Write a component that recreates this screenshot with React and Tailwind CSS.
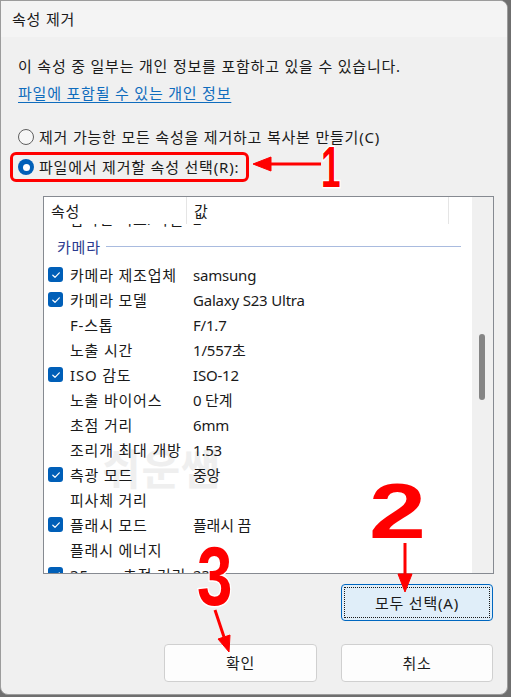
import React from 'react';

const rows = [
  { label: '카메라 제조업체', value: 'samsung', checked: true },
  { label: '카메라 모델', value: 'Galaxy S23 Ultra', checked: true },
  { label: 'F-스톱', value: 'F/1.7', checked: false },
  { label: '노출 시간', value: '1/557초', checked: false },
  { label: 'ISO 감도', value: 'ISO-12', checked: true },
  { label: '노출 바이어스', value: '0 단계', checked: false },
  { label: '초점 거리', value: '6mm', checked: false },
  { label: '조리개 최대 개방', value: '1.53', checked: false },
  { label: '측광 모드', value: '중앙', checked: true },
  { label: '피사체 거리', value: '', checked: false },
  { label: '플래시 모드', value: '플래시 끔', checked: true },
  { label: '플래시 에너지', value: '', checked: false },
  { label: '35mm 초점 거리', value: '23', checked: true },
];

const Check = ({ checked }) =>
  checked ? (
    <span className="w-[15px] h-[15px] rounded-[3px] bg-[#005fb8] flex items-center justify-center shrink-0">
      <svg width="10" height="10" viewBox="0 0 10 10" fill="none">
        <path d="M1.8 5.2 L4 7.3 L8.3 2.8" stroke="white" strokeWidth="1.2" strokeLinecap="round" strokeLinejoin="round" />
      </svg>
    </span>
  ) : (
    <span className="w-[15px] h-[15px] shrink-0" />
  );

const Row = ({ row }) => (
  <div className="h-[25px] flex items-center shrink-0">
    <div className="w-[149px] flex items-center pl-[4px] shrink-0">
      <Check checked={row.checked} />
      <span className="ml-[7px] whitespace-nowrap">{row.label}</span>
    </div>
    <span className="whitespace-nowrap tracking-[-0.2px]">{row.value}</span>
  </div>
);

const Radio = ({ selected, children }) => (
  <div className="flex items-center h-[20px] pl-[17px]">
    {selected ? (
      <span className="w-[16px] h-[16px] rounded-full bg-[#005fb8] flex items-center justify-center">
        <span className="w-[7px] h-[7px] rounded-full bg-white" />
      </span>
    ) : (
      <span className="w-[16px] h-[16px] rounded-full border border-[#5f5f5f] bg-[#f7f7f7]" />
    )}
    <span className="ml-[5px] whitespace-nowrap">{children}</span>
  </div>
);

const App = () => {
  return (
    <div
      className="relative w-[511px] h-[697px] bg-[#6f6f6f] overflow-hidden text-[15px] leading-[20px] tracking-[0.8px] text-[#1a1a1a]"
      style={{ fontFamily: '"Segoe UI", "Noto Sans", "Noto Sans CJK KR", sans-serif' }}
    >
      <div className="w-[508px] h-[695px] bg-[#f0f0f0] border border-[#9c9c9c] rounded-tr-[8px] rounded-b-[8px] flex flex-col overflow-hidden">
        {/* Title */}
        <div className="h-[36px] flex items-center pl-[11px] bg-[#f4f4f4] shrink-0">속성 제거</div>

        <div className="mt-[19px] pl-[17px] h-[20px] whitespace-nowrap">이 속성 중 일부는 개인 정보를 포함하고 있을 수 있습니다.</div>
        <div className="mt-[7px] pl-[17px] h-[20px]">
          <span className="text-[#0f6cbd] underline underline-offset-[3px]">파일에 포함될 수 있는 개인 정보</span>
        </div>

        <div className="mt-[24px]">
          <Radio>제거 가능한 모든 속성을 제거하고 복사본 만들기(C)</Radio>
        </div>
        <div className="mt-[10px]">
          <Radio selected>파일에서 제거할 속성 선택(R):</Radio>
        </div>

        {/* Property list */}
        <div className="mt-[19px] ml-[42px] w-[451px] h-[378px] border border-[#868a91] bg-white flex shrink-0">
          <div className="relative isolate flex-1 flex flex-col overflow-hidden">
            <div className="absolute z-0 left-[58px] top-[250px] text-[42px] leading-[44px] font-bold text-[#efefef] whitespace-nowrap select-none">
              쉬운쌤
            </div>
            <div className="relative z-10 flex flex-col">
              <div className="h-[27px] flex items-center shrink-0 bg-white relative z-10">
                <div className="w-[143px] h-full flex items-center pl-[7px] border-r border-[#e5e5e5]">속성</div>
                <div className="w-[262px] h-full flex items-center pl-[7px] border-r border-[#e5e5e5]">값</div>
              </div>
              <div className="h-[7px] overflow-hidden shrink-0">
                <div className="-mt-[18px]">
                  <Row row={{ label: '압축된 비트/픽셀', value: '2', checked: false }} />
                </div>
              </div>
              <div className="h-[31px] flex items-center pl-[13px] pr-[11px] shrink-0">
                <span className="text-[#2b3a8f]">카메라</span>
                <span className="flex-1 ml-[5px] h-px bg-[#a9bbdf]" />
              </div>
              {rows.map((r) => (
                <Row key={r.label} row={r} />
              ))}
            </div>
          </div>
          <div className="w-[21px] bg-[#f0f0f0] relative shrink-0">
            <div className="absolute left-[7px] top-[137px] w-[6px] h-[66px] rounded-full bg-[#858585]" />
          </div>
        </div>

        <div className="mt-[10px] ml-[340px] w-[152px] h-[37px] rounded-[4px] border border-[#0067c0] bg-[#e0eef9] p-[2px] shrink-0">
          <div className="w-full h-full border border-dotted border-[#1a1a1a] flex items-center justify-center">
            모두 선택(A)
          </div>
        </div>

        <div className="mt-[23px] flex shrink-0">
          <div className="ml-[163px] w-[153px] h-[38px] rounded-[4px] border border-[#d0d0d0] bg-[#fdfdfd] flex items-center justify-center">
            확인
          </div>
          <div className="ml-[24px] w-[152px] h-[38px] rounded-[4px] border border-[#d0d0d0] bg-[#fdfdfd] flex items-center justify-center">
            취소
          </div>
        </div>
      </div>

      {/* Annotations */}
      <div className="absolute left-[10px] top-[152px] w-[239px] h-[30px] border-[3px] border-[#ff0000] rounded-[6px] pointer-events-none" />
      <svg className="absolute left-0 top-0 pointer-events-none" width="511" height="697" viewBox="0 0 511 697">
        <g fill="#ff0000" stroke="#ff0000">
          <line x1="268" y1="164" x2="321" y2="164" strokeWidth="3" />
          <polygon points="253,164 271,157 271,171" strokeWidth="1" />
          <line x1="405" y1="543" x2="405" y2="576" strokeWidth="3" />
          <polygon points="405,592 398,574 412,574" strokeWidth="1" />
          <line x1="215" y1="610" x2="224" y2="637" strokeWidth="3" />
          <polygon points="229,652 218,639 230,635" strokeWidth="1" />
        </g>
        <g
          fill="#ff0000"
          stroke="white"
          strokeWidth="3"
          paintOrder="stroke"
          fontFamily='"Liberation Sans", Arial, sans-serif'
          fontWeight="bold"
        >
          <text x="321" y="187" fontSize="57" textLength="20" lengthAdjust="spacingAndGlyphs">1</text>
          <text x="369" y="538" fontSize="78" textLength="58" lengthAdjust="spacingAndGlyphs">2</text>
          <text x="197" y="605" fontSize="84" textLength="36" lengthAdjust="spacingAndGlyphs">3</text>
        </g>
      </svg>
    </div>
  );
};

export default App;
